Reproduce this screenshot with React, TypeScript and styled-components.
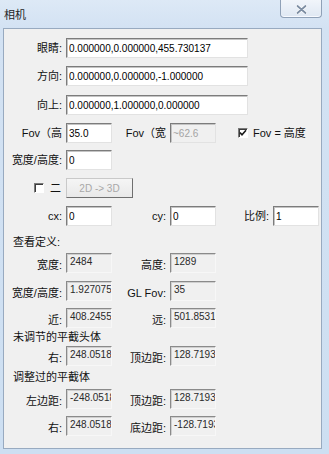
import React from "react";
import styled, { createGlobalStyle } from "styled-components";

const GlobalStyle = createGlobalStyle`
  html, body { margin: 0; padding: 0; background: #ffffff; }
  body {
    font-family: "Liberation Sans", "Noto Sans CJK SC", sans-serif;
    font-size: 11px;
    color: #000;
  }
  * { box-sizing: border-box; }
`;

const Window = styled.div`
  width: 329px;
  height: 454px;
  display: flex;
  flex-direction: column;
  background: linear-gradient(to bottom, #dde9f6 0px, #d3e2f3 28px, #cddff2 100%);
`;

const TitleBar = styled.div`
  height: 28px;
  display: flex;
  justify-content: space-between;
  align-items: flex-start;
  padding-left: 4px;
  flex-shrink: 0;
`;

const Title = styled.div`
  padding-top: 7px;
  line-height: 16px;
  font-size: 11px;
  color: #1e1e1e;
`;

const CloseButton = styled.div`
  width: 42px;
  height: 18px;
  margin-right: 7px;
  border: 1px solid #8fa1b7;
  border-top: none;
  border-radius: 0 0 4px 4px;
  background: linear-gradient(to bottom, #f1f5fa, #dfe8f3);
  box-shadow: inset 0 -1px 0 #f7faff;
  display: flex;
  align-items: center;
  justify-content: center;
  padding-top: 1px;
`;

const Panel = styled.div`
  flex: 1;
  margin: 0 7px 5px 3px;
  border: 1px solid #98aac0;
  background: #f0f0f0;
  padding-top: 9px;
  display: flex;
  flex-direction: column;
`;

const Row = styled.div<{ $mt?: number }>`
  display: flex;
  align-items: center;
  height: 20px;
  margin-top: ${(p) => p.$mt ?? 0}px;
`;

const ReadRow = styled.div<{ $mt?: number }>`
  display: flex;
  align-items: flex-end;
  height: 20px;
  margin-top: ${(p) => p.$mt ?? 0}px;
`;

const Label = styled.span<{ $w: number }>`
  width: ${(p) => p.$w}px;
  flex-shrink: 0;
  text-align: right;
  white-space: nowrap;
  margin-right: 4px;
  line-height: 16px;
  color: #111;
`;

const Field = styled.input<{ $w: number }>`
  width: ${(p) => p.$w}px;
  height: 20px;
  flex-shrink: 0;
  margin: 0;
  padding: 0 2px;
  border: 1px solid;
  border-color: #7c7c7c #e2e2e2 #e2e2e2 #7c7c7c;
  box-shadow: inset 1px 1px 0 #c4c4c4;
  background: #ffffff;
  font-family: "Liberation Sans", sans-serif;
  font-size: 10px;
  color: #000;
  outline: none;
  border-radius: 0;
  &:disabled {
    background: #f0f0f0;
    color: #a3a3a3;
  }
`;

const ReadBox = styled.div<{ $w: number }>`
  width: ${(p) => p.$w}px;
  height: 20px;
  flex-shrink: 0;
  padding: 1px 2px 0 3px;
  border: 1px solid;
  border-color: #8a8a8a #f7f7f7 #f7f7f7 #8a8a8a;
  box-shadow: inset 1px 1px 0 #cfcfcf;
  background: #f0f0f0;
  font-family: "Liberation Sans", sans-serif;
  font-size: 10px;
  line-height: 14px;
  color: #2a2a2a;
  white-space: nowrap;
  overflow: hidden;
`;

const Check = styled.span<{ $ml: number }>`
  width: 10px;
  height: 10px;
  flex-shrink: 0;
  margin-left: ${(p) => p.$ml}px;
  border: 1px solid;
  border-color: #7a7a7a #ffffff #ffffff #7a7a7a;
  box-shadow: inset 1px 1px 0 #3c3c3c;
  background: #ffffff;
  display: flex;
  align-items: center;
  justify-content: center;
`;

const CheckText = styled.span<{ $ml: number }>`
  margin-left: ${(p) => p.$ml}px;
  white-space: nowrap;
  line-height: 16px;
  color: #111;
`;

const Button = styled.div`
  width: 67px;
  height: 20px;
  margin-left: 5px;
  flex-shrink: 0;
  border: 1px solid;
  border-color: #c9c9c9 #6f6f6f #6f6f6f #c9c9c9;
  background: linear-gradient(to bottom, #f5f5f5, #e9e9e9);
  display: flex;
  align-items: center;
  justify-content: center;
  font-family: "Liberation Sans", sans-serif;
  font-size: 10px;
  color: #a8a8a8;
`;

const SectionTitle = styled.div<{ $mt: number; $h: number }>`
  margin-top: ${(p) => p.$mt}px;
  height: ${(p) => p.$h}px;
  line-height: ${(p) => p.$h}px;
  padding-left: 9px;
  color: #111;
  white-space: nowrap;
`;

const Spacer = styled.span<{ $w: number }>`
  width: ${(p) => p.$w}px;
  flex-shrink: 0;
`;

const CloseIcon = () => (
  <svg width="11" height="9" viewBox="0 0 11 9">
    <path d="M1.5 1 L9.5 8 M9.5 1 L1.5 8" stroke="#ffffff" strokeWidth="3.2" strokeLinecap="round" />
    <path d="M1.5 1 L9.5 8 M9.5 1 L1.5 8" stroke="#7d8ea3" strokeWidth="1.8" strokeLinecap="round" />
  </svg>
);

const Tick = () => (
  <svg width="8" height="8" viewBox="0 0 8 8">
    <path d="M1 3.6 L3 5.8 L7 1.2" stroke="#1a1a1a" strokeWidth="1.6" fill="none" />
  </svg>
);

type RO = { l1: string; v1: string; l2: string; v2: string; mt: number };

const RORow = ({ l1, v1, l2, v2, mt }: RO) => (
  <ReadRow $mt={mt}>
    <Label $w={58}>{l1}</Label>
    <ReadBox $w={46}>{v1}</ReadBox>
    <Label $w={54}>{l2}</Label>
    <ReadBox $w={46}>{v2}</ReadBox>
  </ReadRow>
);

export default function App() {
  return (
    <>
      <GlobalStyle />
      <Window>
        <TitleBar>
          <Title>相机</Title>
          <CloseButton>
            <CloseIcon />
          </CloseButton>
        </TitleBar>
        <Panel>
          <Row>
            <Label $w={58}>眼睛:</Label>
            <Field $w={182} defaultValue="0.000000,0.000000,455.730137" />
          </Row>
          <Row $mt={8}>
            <Label $w={58}>方向:</Label>
            <Field $w={182} defaultValue="0.000000,0.000000,-1.000000" />
          </Row>
          <Row $mt={9}>
            <Label $w={58}>向上:</Label>
            <Field $w={182} defaultValue="0.000000,1.000000,0.000000" />
          </Row>
          <Row $mt={8}>
            <Label $w={58}>Fov（高</Label>
            <Field $w={46} defaultValue="35.0" />
            <Label $w={54}>Fov（宽</Label>
            <Field $w={46} defaultValue="~62.6" disabled />
            <Check $ml={22}>
              <Tick />
            </Check>
            <CheckText $ml={5}>Fov = 高度</CheckText>
          </Row>
          <Row $mt={7}>
            <Label $w={58}>宽度/高度:</Label>
            <Field $w={46} defaultValue="0" />
          </Row>
          <Row $mt={8}>
            <Check $ml={30} />
            <CheckText $ml={6}>二</CheckText>
            <Button>2D -&gt; 3D</Button>
          </Row>
          <Row $mt={8}>
            <Label $w={58}>cx:</Label>
            <Field $w={46} defaultValue="0" />
            <Label $w={54}>cy:</Label>
            <Field $w={46} defaultValue="0" />
            <Label $w={53}>比例:</Label>
            <Field $w={46} defaultValue="1" />
            <Spacer $w={0} />
          </Row>
          <SectionTitle $mt={6} $h={20}>查看定义:</SectionTitle>
          <RORow mt={1} l1="宽度:" v1="2484" l2="高度:" v2="1289" />
          <RORow mt={8} l1="宽度/高度:" v1="1.927075" l2="GL Fov:" v2="35" />
          <RORow mt={7} l1="近:" v1="408.2455" l2="远:" v2="501.8531" />
          <SectionTitle $mt={1} $h={16}>未调节的平截头体</SectionTitle>
          <RORow mt={1} l1="右:" v1="248.0518" l2="顶边距:" v2="128.7193" />
          <SectionTitle $mt={3} $h={16}>调整过的平截体</SectionTitle>
          <RORow mt={4} l1="左边距:" v1="-248.0518" l2="顶边距:" v2="128.7193" />
          <RORow mt={7} l1="右:" v1="248.0518" l2="底边距:" v2="-128.7193" />
        </Panel>
      </Window>
    </>
  );
}
